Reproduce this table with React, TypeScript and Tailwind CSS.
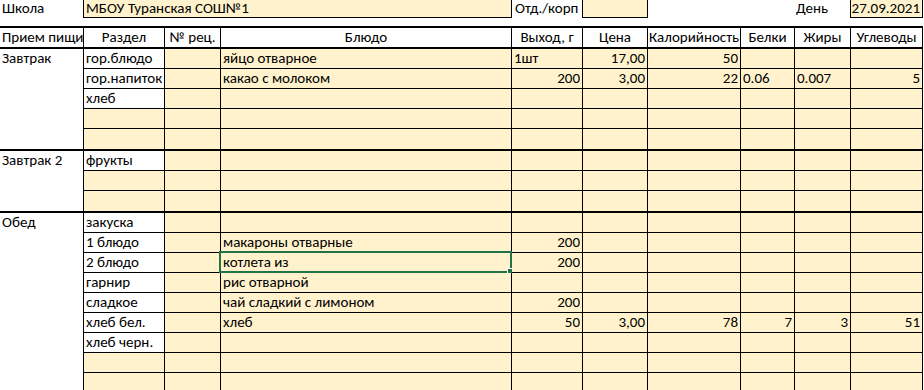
import React from 'react';

// column widths, each includes its 1px right border
const COLS = ['w-[81px]', 'w-[56px]', 'w-[291px]', 'w-[71px]', 'w-[65px]', 'w-[93px]', 'w-[54px]', 'w-[56px]', 'w-[72px]'];

type Row = { cells: string[]; sel?: number };

const groups: { meal: string; rows: Row[] }[] = [
  {
    meal: 'Завтрак',
    rows: [
      { cells: ['гор.блюдо', '', 'яйцо отварное', '1шт', '17,00', '50', '', '', ''] },
      { cells: ['гор.напиток', '', 'какао с молоком', '200', '3,00', '22', '0.06', '0.007', '5'] },
      { cells: ['хлеб'] },
      { cells: [] },
      { cells: [] },
    ],
  },
  {
    meal: 'Завтрак 2',
    rows: [{ cells: ['фрукты'] }, { cells: [] }, { cells: [] }],
  },
  {
    meal: 'Обед',
    rows: [
      { cells: ['закуска'] },
      { cells: ['1 блюдо', '', 'макароны отварные', '200'] },
      { cells: ['2 блюдо', '', 'котлета из', '200'], sel: 2 },
      { cells: ['гарнир', '', 'рис отварной'] },
      { cells: ['сладкое', '', 'чай сладкий с лимоном', '200'] },
      { cells: ['хлеб бел.', '', 'хлеб', '50', '3,00', '78', '7', '3', '51'] },
      { cells: ['хлеб черн.'] },
      { cells: [] },
      { cells: [] },
    ],
  },
];

const headers = ['Раздел', '№ рец.', 'Блюдо', 'Выход, г', 'Цена', 'Калорийность', 'Белки', 'Жиры', 'Углеводы'];

const isNum = (s: string) => /^[\d,]+$/.test(s);

function DataRow({ row, last }: { row: Row; last: boolean }) {
  return (
    <div className="flex">
      {COLS.map((w, i) => {
        const text = row.cells[i] ?? '';
        const white = i === 0 && text !== '';
        return (
          <div
            key={i}
            className={[
              w,
              'relative shrink-0 h-[20px] leading-[19px] border-r border-black px-[2px] whitespace-nowrap overflow-visible',
              last ? 'h-[19px]' : 'border-b',
              white ? 'bg-white' : 'bg-[#fff2cc]',
              isNum(text) ? 'text-right' : 'text-left',
            ].join(' ')}
          >
            <span className="block overflow-hidden">{text}</span>
            {row.sel === i && (
              <div className="absolute -left-[2px] -top-[2px] -right-[1px] -bottom-[1px] border-2 border-[#217346] pointer-events-none">
                <div className="absolute -right-[4px] -bottom-[4px] w-[7px] h-[7px] bg-[#217346] border border-white" />
              </div>
            )}
          </div>
        );
      })}
    </div>
  );
}

export default function App() {
  return (
    <div className="w-[924px] h-[390px] overflow-hidden bg-white text-black text-[15px] font-['Carlito','Lato',sans-serif]">
      {/* top line: school, department, date */}
      <div className="flex h-[18px] leading-[17px]">
        <div className="w-[83px] pl-[2px]">Школа</div>
        <div className="w-[429px] border-x border-b border-black bg-[#fff2cc] pl-[2px]">МБОУ Туранская СОШ№1</div>
        <div className="w-[70px] pl-[3px]">Отд./корп</div>
        <div className="w-[66px] border-x border-b border-black bg-[#fff2cc]" />
        <div className="w-[147px]" />
        <div className="w-[55px] pl-[1px]">День</div>
        <div className="w-[73px] border-x border-b border-black bg-[#fff2cc] pr-[2px] text-right">27.09.2021</div>
      </div>

      <div className="mt-[8px] w-[923px]">
        {/* header */}
        <div className="flex border-y-2 border-black h-[23px] leading-[19px]">
          <div className="w-[84px] shrink-0 border-r border-black pl-[2px] whitespace-nowrap overflow-hidden">Прием пищи</div>
          {headers.map((h, i) => (
            <div key={h} className={`${COLS[i]} shrink-0 border-r border-black text-center whitespace-nowrap overflow-hidden`}>
              {h}
            </div>
          ))}
        </div>

        {groups.map((g) => (
          <div key={g.meal} className="flex border-b-2 border-black">
            <div className="w-[84px] shrink-0 border-r border-black bg-white pl-[2px] leading-[19px] whitespace-nowrap">{g.meal}</div>
            <div className="flex flex-col">
              {g.rows.map((r, i) => (
                <DataRow key={i} row={r} last={i === g.rows.length - 1} />
              ))}
            </div>
          </div>
        ))}
      </div>
    </div>
  );
}
